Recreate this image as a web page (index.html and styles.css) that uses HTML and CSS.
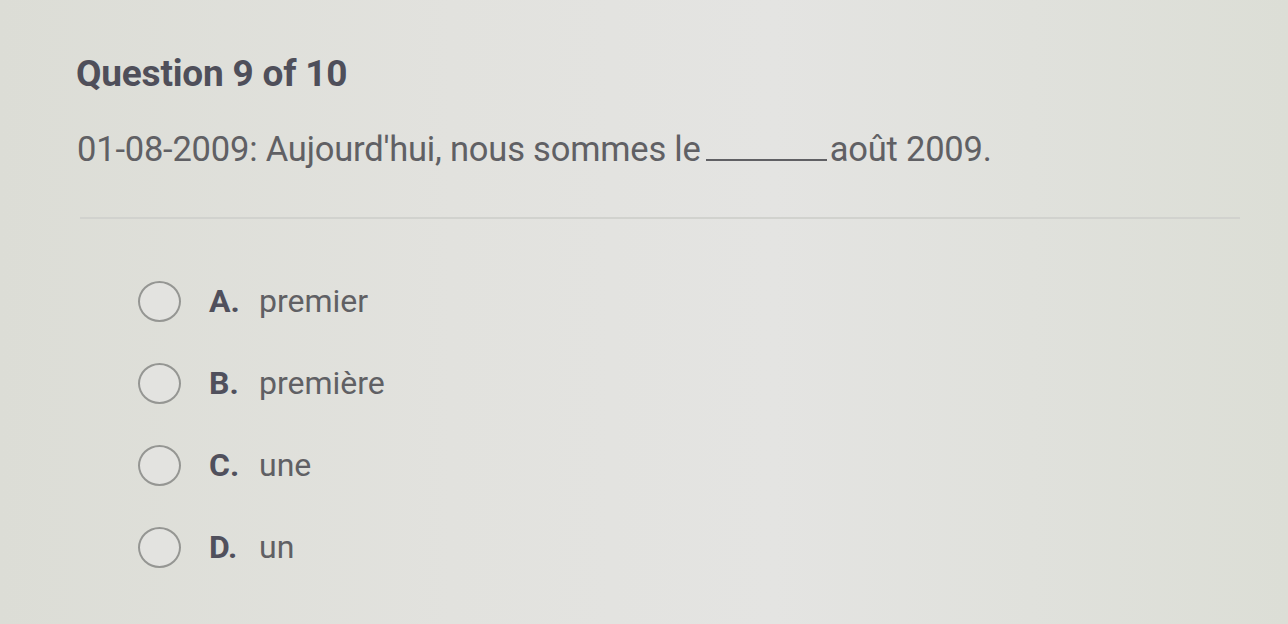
FILE: index.html
```html
<!DOCTYPE html>
<html>
<head>
<meta charset="utf-8">
<link rel="stylesheet" href="styles.css">
</head>
<body>
<div class="page">
  <h1 class="title">Question 9 of 10</h1>
  <p class="prompt">01-08-2009: Aujourd'hui, nous sommes le<span class="blank"></span>août 2009.</p>
  <hr class="divider">
  <ul class="options">
    <li class="option"><span class="radio"></span><span class="letter">A.</span><span class="answer">premier</span></li>
    <li class="option"><span class="radio"></span><span class="letter">B.</span><span class="answer">première</span></li>
    <li class="option"><span class="radio"></span><span class="letter">C.</span><span class="answer">une</span></li>
    <li class="option"><span class="radio"></span><span class="letter">D.</span><span class="answer">un</span></li>
  </ul>
</div>
</body>
</html>
```
FILE: styles.css
```css
html, body {
  margin: 0;
  padding: 0;
}
body {
  width: 1288px;
  height: 624px;
  overflow: hidden;
  background: linear-gradient(90deg, #dcddd6 0%, #e2e2de 35%, #e4e4e2 60%, #dcded6 100%);
  font-family: Roboto, "Liberation Sans", Arial, sans-serif;
  color: #5e5e62;
}
.page {
  padding: 52px 48px 0 76px;
}
.title {
  margin: 0;
  font-size: 37px;
  font-weight: 700;
  color: #4f4f5a;
  line-height: 44px;
  letter-spacing: -0.2px;
}
.prompt {
  margin: 33px 0 0 1px;
  font-size: 34.5px;
  line-height: 40px;
  color: #606064;
  letter-spacing: -0.2px;
}
.blank {
  display: inline-block;
  width: 121px;
  border-bottom: 2px solid #606064;
  margin: 0 3px 0 5px;
  vertical-align: baseline;
}
.divider {
  border: 0;
  border-top: 2px solid #d1d2ce;
  margin: 48px 0 0 4px;
  width: 1160px;
}
.options {
  list-style: none;
  margin: 61px 0 0 0;
  padding: 0 0 0 62px;
  display: flex;
  flex-direction: column;
  gap: 40px;
}
.option {
  display: flex;
  align-items: center;
  height: 42px;
  font-size: 32px;
}
.radio {
  width: 43px;
  height: 41px;
  border: 2.5px solid #959693;
  border-radius: 50%;
  box-sizing: border-box;
  background: #e3e3e0;
  flex: none;
}
.letter {
  font-weight: 700;
  color: #50505c;
  margin-left: 28px;
  width: 50px;
}
.answer {
  color: #606064;
}
```
